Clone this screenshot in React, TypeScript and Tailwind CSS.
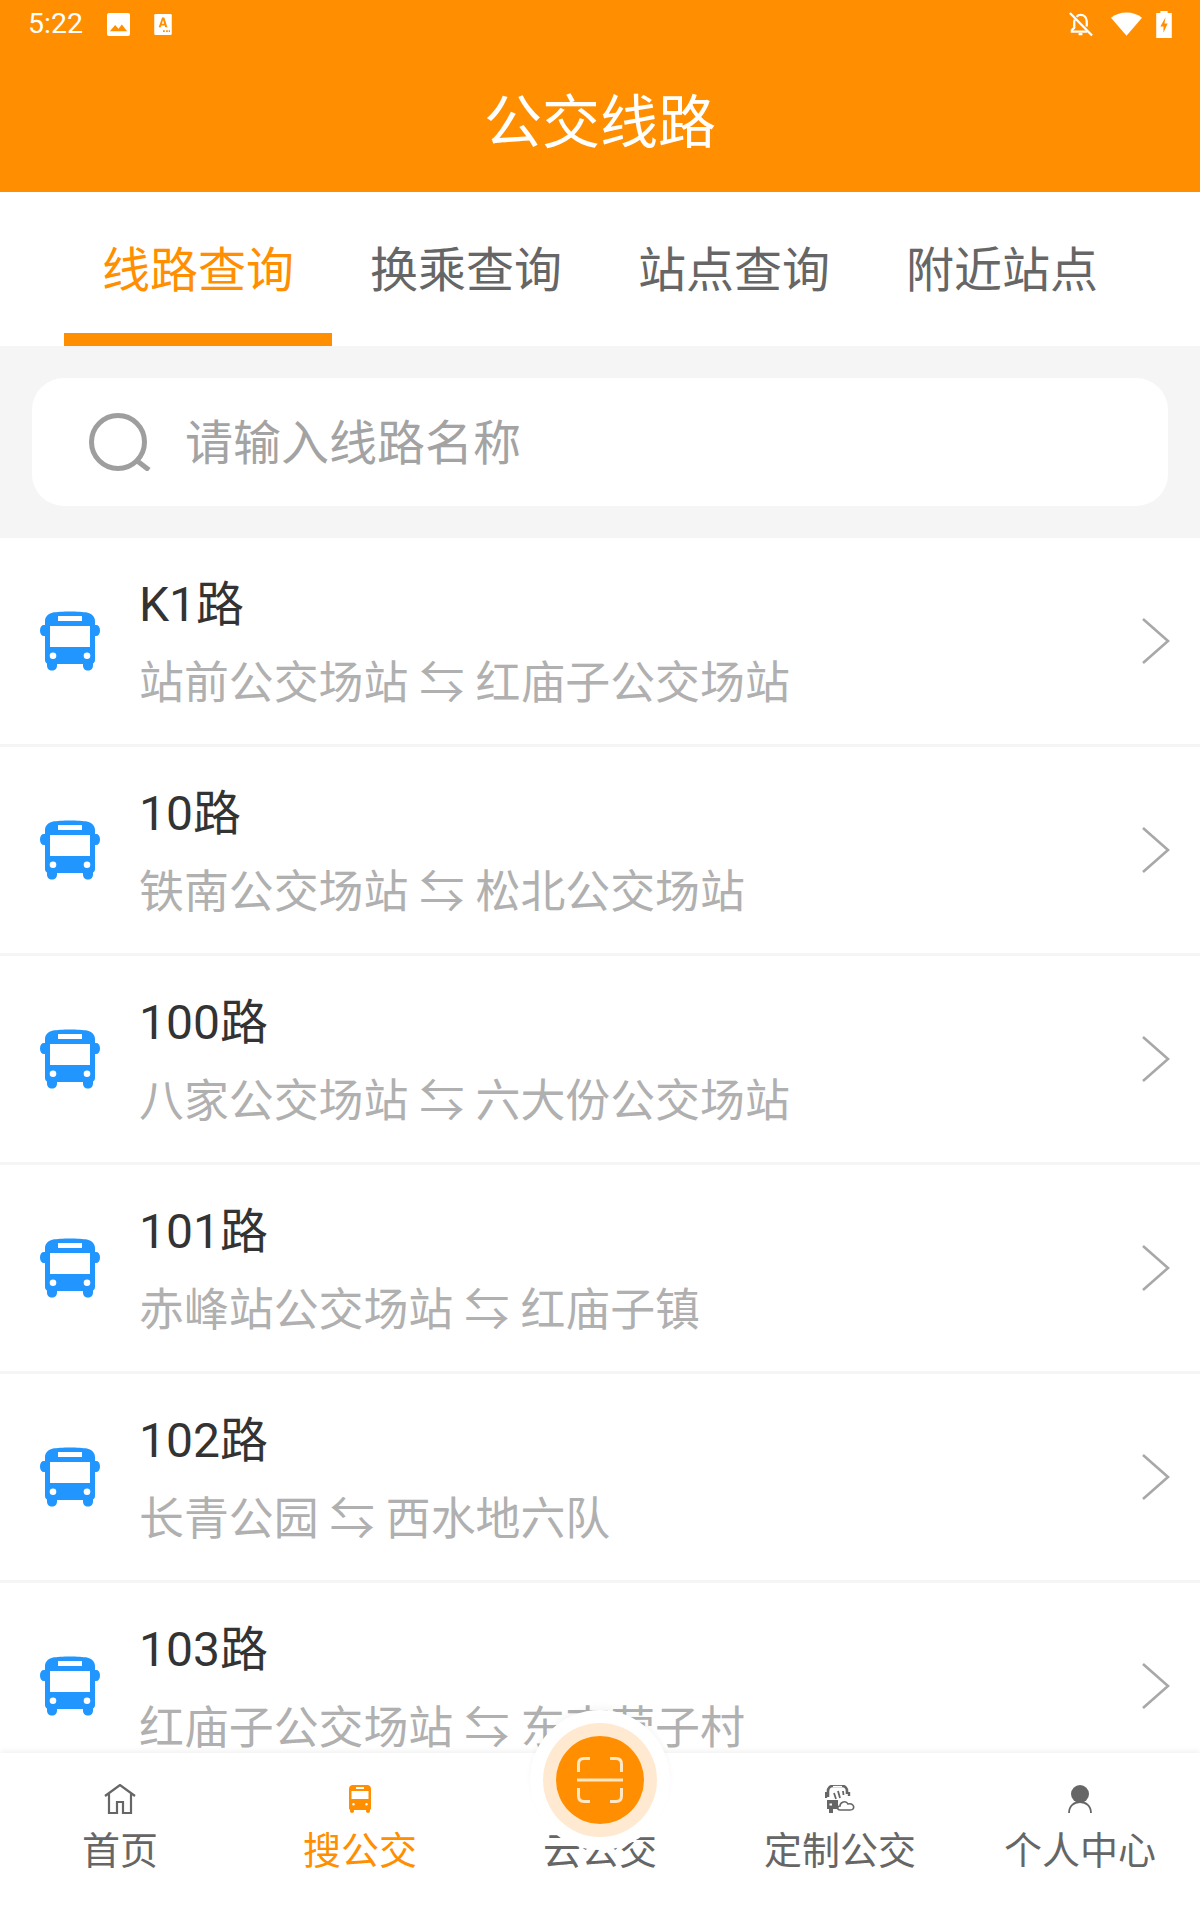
const routes = [
  { name: "K1路", from: "站前公交场站", to: "红庙子公交场站" },
  { name: "10路", from: "铁南公交场站", to: "松北公交场站" },
  { name: "100路", from: "八家公交场站", to: "六大份公交场站" },
  { name: "101路", from: "赤峰站公交场站", to: "红庙子镇" },
  { name: "102路", from: "长青公园", to: "西水地六队" },
  { name: "103路", from: "红庙子公交场站", to: "东南营子村" },
];

const tabs = ["线路查询", "换乘查询", "站点查询", "附近站点"];

function BusIcon({ className }: { className: string }) {
  return (
    <svg viewBox="0 0 60 60" className={className}>
      <path
        fill="currentColor"
        fillRule="evenodd"
        d="M13 1.5C20 0 40 0 47 1.500C51 2.500 55 5 55 10V14H56C58.500 14 60 16 60 19.500C60 23 58.500 25 56 25H55V49C55 51 54 52 53 52.500V54.500C53 57.500 51 59.500 48 59.500C45 59.500 43 57.500 43 54.500V53H17V54.500C17 57.500 15 59.500 12 59.500C9 59.500 7 57.500 7 54.500V52.500C6 52 5 51 5 49V25H4C1.500 25 0 23 0 19.500C0 16 1.500 14 4 14H5V10C5 5 9 2.500 13 1.500ZM18 5V10H42V5ZM10 15V36H50V15ZM13 41.500A3.300 3.300 0 1 0 13 48.100A3.300 3.300 0 1 0 13 41.500ZM47 41.500A3.300 3.300 0 1 0 47 48.100A3.300 3.300 0 1 0 47 41.500Z"
      />
    </svg>
  );
}

function StatusBar() {
  return (
    <div className="flex h-[48px] items-center pl-[28px] pr-[28px] font-['Roboto',sans-serif] text-[28.500px] text-white">
      <span className="w-[79px]">5:22</span>
      <svg viewBox="0 0 24 24" className="h-[23px] w-[23px]">
        <rect width="24" height="24" rx="2" fill="#fff" />
        <path d="M3 19 8.500 12.500 12 16.500 15.500 12 21 19Z" fill="#ff8f00" />
      </svg>
      <svg viewBox="0 0 20 24" className="ml-[24px] h-[21px] w-[18px]">
        <rect width="20" height="24" rx="1.500" fill="#fff" />
        <path d="M5 15 9 4H11.500L15 15H12.500L12 13H8L7.500 15ZM8.700 11H11.300L10 6.800Z" fill="#ff8f00" />
        <path d="M10 19.500H12M13.500 19.500H15.500M16.500 19.500H18" stroke="#ff8f00" strokeWidth="2" />
      </svg>
      <div className="ml-auto flex items-center">
        <svg viewBox="0 0 26 26" className="h-[26px] w-[25px]" fill="none" stroke="#fff" strokeWidth="2.400">
          <path d="M2 1.500 25 25" />
          <path d="M9 5.500C10 4 11.500 3.500 13 3.500 17 3.500 19.500 6.500 19.500 10.500V15.500M7 8.500C6.600 9.500 6.500 10 6.500 11V17L4 19.500V21H20" />
          <path d="M11 23.500H15" />
        </svg>
        <svg viewBox="0 0 32 24" className="ml-[18px] h-[24px] w-[31px]">
          <path d="M16 24 0 5.500C4 2 10 0 16 0S28 2 32 5.500Z" fill="#fff" />
        </svg>
        <svg viewBox="0 0 15 26" className="ml-[14px] h-[27px] w-[16px]">
          <path d="M4 0H11V2H15V26H0V2H4Z" fill="#fff" />
          <path d="M9 6 4 15H7V21L11 12H8Z" fill="#ff8f00" />
        </svg>
      </div>
    </div>
  );
}

function RouteRow({ name, from, to }: { name: string; from: string; to: string }) {
  return (
    <div className="flex h-[209px] shrink-0 items-center border-b-[3px] border-[#f5f5f5] bg-white pl-[40px] pr-[30px]">
      <BusIcon className="h-[60px] w-[60px] shrink-0 text-[#2196ff]" />
      <div className="ml-[39px] flex-1 pt-[6px]">
        <div className="text-[48px] leading-[56px] text-[#333333]">{name}</div>
        <div className="mt-[23px] text-[44.900px] leading-[56px] whitespace-nowrap text-[#b0b0b0]">
          {from} <span>⇆</span> {to}
        </div>
      </div>
      <svg viewBox="0 0 29 46" className="h-[46px] w-[29px] shrink-0" fill="none" stroke="#a8a8a8" strokeWidth="2.600">
        <path d="M2 1 27 23 2 45" />
      </svg>
    </div>
  );
}

function NavItem({ label, active, children }: { label: string; active?: boolean; children?: React.ReactNode }) {
  return (
    <div className={`flex flex-1 flex-col items-center ${active ? "text-[#ff8f00]" : "text-[#666666]"}`}>
      <div className="flex h-[32px] items-center justify-center">{children}</div>
      <div className="mt-[11px] text-[38px] leading-[50px]">{label}</div>
    </div>
  );
}

export default function App() {
  return (
    <div className="flex h-[1920px] w-[1200px] flex-col overflow-hidden bg-[#f5f5f5] font-['Roboto','Noto_Sans_CJK_SC',sans-serif]">
      <div className="h-[192px] shrink-0 bg-[#ff8f00]">
        <StatusBar />
        <div className="pt-[41px] text-center text-[58px] leading-[68px] text-white">公交线路</div>
      </div>

      <div className="flex h-[154px] shrink-0 bg-white px-[64px]">
        {tabs.map((tab, i) => (
          <div
            key={tab}
            className={`flex w-[268px] items-center justify-center border-b-[13px] pt-[17px] text-[48px] ${
              i === 0 ? "border-[#ff8f00] text-[#ff8f00]" : "border-transparent text-[#666666]"
            }`}
          >
            {tab}
          </div>
        ))}
      </div>

      <div className="h-[192px] shrink-0 px-[32px] py-[32px]">
        <div className="flex h-[128px] items-center rounded-[32px] bg-white pl-[57px]">
          <svg viewBox="0 0 62 58" className="h-[58px] w-[62px]" fill="none" stroke="#9e9e9e" strokeWidth="5">
            <circle cx="29" cy="29" r="26.500" />
            <path d="M47 47 60 57" />
          </svg>
          <span className="ml-[34px] pt-[3px] text-[48px] text-[#a3a3a3]">请输入线路名称</span>
        </div>
      </div>

      <div className="flex min-h-0 flex-1 flex-col overflow-hidden">
        {routes.map((route) => (
          <RouteRow key={route.name} {...route} />
        ))}
      </div>

      <div className="relative flex h-[167px] shrink-0 bg-white pt-[30px] shadow-[0_-2px_6px_rgba(0,0,0,0.06)]">
        <NavItem label="首页">
          <svg viewBox="0 0 32 30" className="h-[30px] w-[32px]" fill="none" stroke="currentColor" strokeWidth="2.200">
            <path d="M1 12 16 1 31 12M5 10V29H13V18H19V29H27V10" />
          </svg>
        </NavItem>
        <NavItem label="搜公交" active>
          <svg viewBox="0 0 22 28" className="h-[28px] w-[22px]">
            <path
              fill="currentColor"
              fillRule="evenodd"
              d="M4 0H18C20.500 0 22 1.500 22 4V23C22 24 21.500 24.500 21 25V26C21 27.200 20 28 19 28S17 27.200 17 26V25H5V26C5 27.200 4 28 3 28S1 27.200 1 26V25C.500 24.500 0 24 0 23V4C0 1.500 1.500 0 4 0ZM7 2V4H15V2ZM2.500 6V14H19.500V6ZM4.500 18A1.300 1.300 0 1 0 4.500 20.600A1.300 1.300 0 1 0 4.500 18ZM17.500 18A1.300 1.300 0 1 0 17.500 20.600A1.300 1.300 0 1 0 17.500 18Z"
            />
          </svg>
        </NavItem>
        <NavItem label="云公交" />
        <NavItem label="定制公交">
          <svg viewBox="0 0 30 28" className="h-[28px] w-[30px]">
            <path
              d="M3 12V6C3 3 5 1 8 1H17C20 1 22 3 22 6V9"
              fill="none"
              stroke="currentColor"
              strokeWidth="2.600"
            />
            <path d="M1 7V13" stroke="currentColor" strokeWidth="2.400" />
            <path d="M24 7V11" stroke="currentColor" strokeWidth="2.400" />
            <path d="M8 1.500H17" stroke="#fff" strokeWidth="1.200" />
            <path d="M9 8 11 14M13 6 15 13M18 6 18.500 10" stroke="currentColor" strokeWidth="1.800" />
            <path d="M2 15H13V24H8V28H4V24H2ZM4.500 18.500V20.500H7V18.500Z" fill="currentColor" fillRule="evenodd" />
            <path d="M15 25C12 25 12 21 15 21 15 17 21 15 23 19 27 18 30 21 28 24 27.500 25 27 25 25 25Z" fill="#fff" stroke="currentColor" strokeWidth="1.600" />
          </svg>
        </NavItem>
        <NavItem label="个人中心">
          <svg viewBox="0 0 24 28" className="h-[28px] w-[24px]">
            <ellipse cx="12" cy="9" rx="9" ry="9" fill="currentColor" />
            <path d="M1 28C1 21 6 17 12 17S23 21 23 28" fill="none" stroke="currentColor" strokeWidth="1.800" />
          </svg>
        </NavItem>

        <div className="absolute -top-[43px] left-[530px] flex h-[140px] w-[140px] items-center justify-center rounded-full bg-white shadow-[0_-4px_5px_rgba(0,0,0,0.03)]">
          <div className="flex h-[114px] w-[114px] items-center justify-center rounded-full bg-[#ffead1]">
            <div className="flex h-[88px] w-[88px] items-center justify-center rounded-full bg-[#ff8f00]">
              <svg viewBox="0 0 46 46" className="h-[46px] w-[46px]" fill="none" stroke="#ffe6c4" strokeWidth="3">
                <path d="M13 1.500H7C3.500 1.500 1.500 3.500 1.500 7V15M33 1.500H39C42.500 1.500 44.500 3.500 44.500 7V15M13 44.500H7C3.500 44.500 1.500 42.500 1.500 39V31M33 44.500H39C42.500 44.500 44.500 42.500 44.500 39V31M0 23H46" />
              </svg>
            </div>
          </div>
        </div>
      </div>
    </div>
  );
}
